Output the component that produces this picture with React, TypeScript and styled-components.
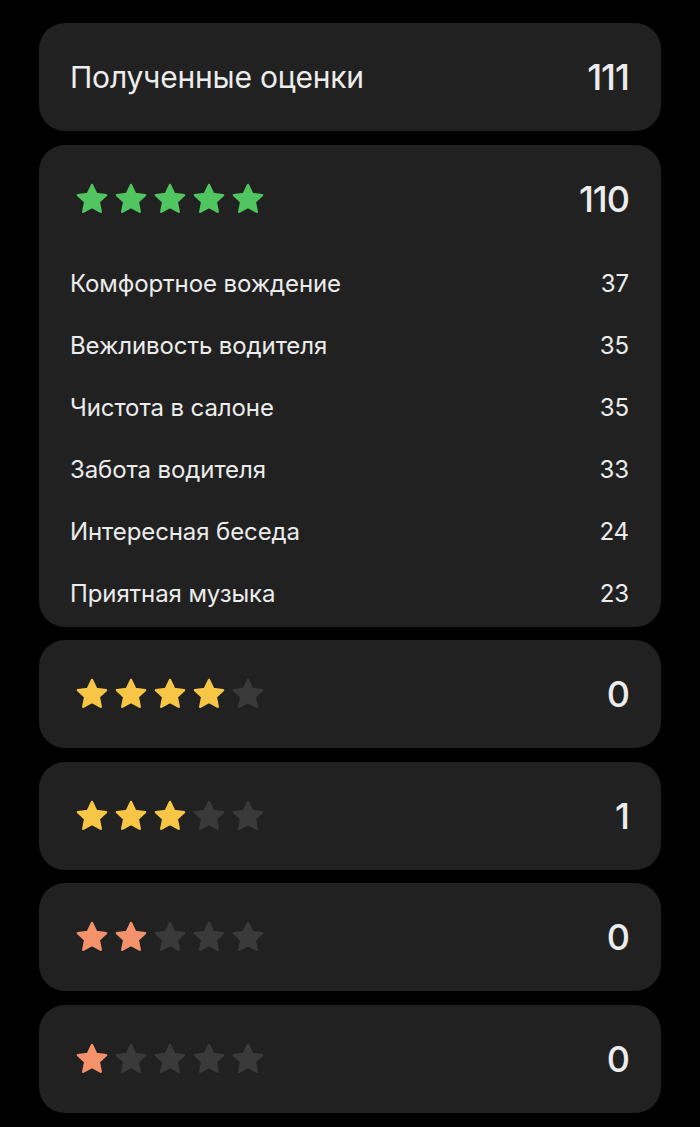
import React from 'react'
import styled, { createGlobalStyle } from 'styled-components'

const GlobalStyle = createGlobalStyle`
  html, body {
    margin: 0;
    padding: 0;
    background: #000000;
  }
  body {
    font-family: Inter, "Noto Sans", "Liberation Sans", sans-serif;
    color: #ececec;
  }
`;

const Page = styled.div`
  display: flex;
  flex-direction: column;
  gap: 13.5px;
  padding: 23px 39px 14px;
`;

const Card = styled.div`
  background: #212121;
  border-radius: 26px;
  padding: 0 32px 0 31px;
`;

const CardHead = styled.div`
  height: 108px;
  display: flex;
  align-items: center;
  justify-content: space-between;
`;

const Title = styled.div`
  font-size: 30px;
  font-weight: 400;
  letter-spacing: -0.2px;
`;

const Total = styled.div`
  font-size: 36px;
  font-weight: 500;
  letter-spacing: -1px;
`;

const Stars = styled.div`
  display: flex;
  gap: 3px;
  padding-left: 4px;
`;

const StarIcon = styled.svg<{ $color: string }>`
  width: 36px;
  height: 36px;
  fill: ${p => p.$color};
  stroke: ${p => p.$color};
`;

const ReasonList = styled.div`
  padding-bottom: 2px;
`;

const ReasonRow = styled.div`
  height: 62px;
  display: flex;
  align-items: center;
  justify-content: space-between;
  font-size: 24px;
  letter-spacing: -0.1px;
`;

const EMPTY = '#3a3a3a';

const Star = ({ color }: { color: string }) => (
    <StarIcon $color={color} viewBox="0 0 24 24">
        <path
            d="M12 2.6l2.85 6.05 6.55.78-4.85 4.55 1.28 6.55L12 17.25l-5.83 3.28 1.28-6.55L2.6 9.43l6.55-.78z"
            strokeWidth={1.6}
            strokeLinejoin="round"
        />
    </StarIcon>
);

const StarLine = ({ filled, color }: { filled: number; color: string }) => (
    <Stars>
        {[0, 1, 2, 3, 4].map(i => (
            <Star key={i} color={i < filled ? color : EMPTY} />
        ))}
    </Stars>
);

const reasons = [
    { name: 'Комфортное вождение', count: 37 },
    { name: 'Вежливость водителя', count: 35 },
    { name: 'Чистота в салоне', count: 35 },
    { name: 'Забота водителя', count: 33 },
    { name: 'Интересная беседа', count: 24 },
    { name: 'Приятная музыка', count: 23 },
];

const lower = [
    { filled: 4, color: '#f7c646', count: 0 },
    { filled: 3, color: '#f7c646', count: 1 },
    { filled: 2, color: '#f4936b', count: 0 },
    { filled: 1, color: '#f4936b', count: 0 },
];

export default function App() {
    return (
        <>
            <GlobalStyle />
            <Page>
                <Card>
                    <CardHead>
                        <Title>Полученные оценки</Title>
                        <Total>111</Total>
                    </CardHead>
                </Card>
                <Card>
                    <CardHead>
                        <StarLine filled={5} color="#50c560" />
                        <Total>110</Total>
                    </CardHead>
                    <ReasonList>
                        {reasons.map((item, index) => (
                            <ReasonRow key={`${item.name}_${index}`}>
                                <span>{item.name}</span>
                                <span>{item.count}</span>
                            </ReasonRow>
                        ))}
                    </ReasonList>
                </Card>
                {lower.map((item, index) => (
                    <Card key={index}>
                        <CardHead>
                            <StarLine filled={item.filled} color={item.color} />
                            <Total>{item.count}</Total>
                        </CardHead>
                    </Card>
                ))}
            </Page>
        </>
    );
}
